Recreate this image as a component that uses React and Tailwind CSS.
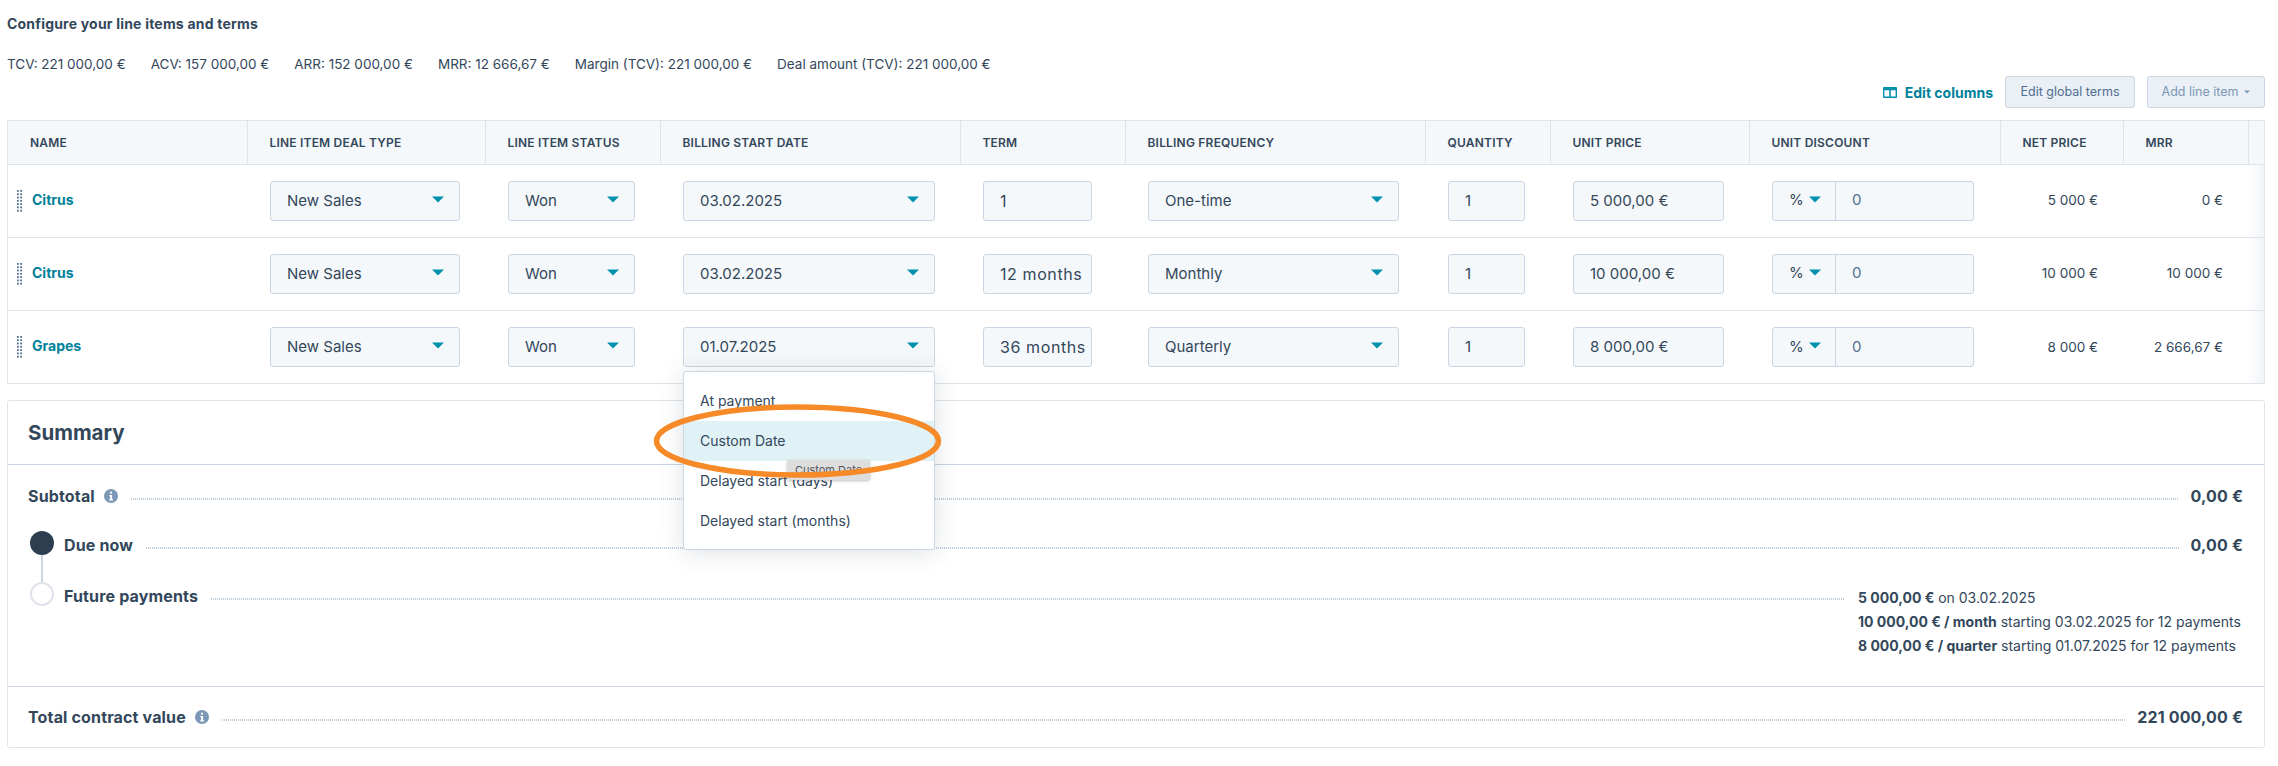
import React from "react";

const lineItems = [
  { name: "Citrus", date: "03.02.2025", term: "1", frequency: "One-time", price: "5 000,00 €", net: "5 000 €", mrr: "0 €" },
  { name: "Citrus", date: "03.02.2025", term: "12 months", frequency: "Monthly", price: "10 000,00 €", net: "10 000 €", mrr: "10 000 €" },
  { name: "Grapes", date: "01.07.2025", term: "36 months", frequency: "Quarterly", price: "8 000,00 €", net: "8 000 €", mrr: "2 666,67 €", open: true },
];

const metrics = [
  "TCV: 221 000,00 €",
  "ACV: 157 000,00 €",
  "ARR: 152 000,00 €",
  "MRR: 12 666,67 €",
  "Margin (TCV): 221 000,00 €",
  "Deal amount (TCV): 221 000,00 €",
];

const headers = [
  "Name",
  "Line item deal type",
  "Line item status",
  "Billing start date",
  "Term",
  "Billing frequency",
  "Quantity",
  "Unit price",
  "Unit discount",
  "Net price",
  "MRR",
];

function Caret({ className = "" }) {
  return (
    <svg width="12" height="7" viewBox="0 0 12 7" className={className}>
      <path d="M0 0.5h12L6 6.5z" fill="#0091ae" />
    </svg>
  );
}

function Select({ value, width }) {
  return (
    <div className={`flex h-10 items-center justify-between rounded-[3px] border border-[#cbd6e2] bg-[#f5f8fa] pl-4 pr-[15px] text-[15px] text-[#33475b] ${width}`}>
      <span className="pt-px">{value}</span>
      <Caret className="-mt-0.5" />
    </div>
  );
}

function TextBox({ value, width, className = "text-[15px]" }) {
  return (
    <div className={`flex h-10 items-center overflow-hidden whitespace-nowrap rounded-[3px] border border-[#cbd6e2] bg-[#f5f8fa] pl-4 pt-px text-[#33475b] ${width} ${className}`}>
      {value}
    </div>
  );
}

function DragHandle() {
  return (
    <svg width="5" height="22" viewBox="0 0 5 22" className="shrink-0">
      {[0, 3.3, 6.6, 9.9, 13.2, 16.5, 19.8].map((y) => (
        <g key={y} fill="#516f90">
          <rect x="0" y={y} width="1.8" height="1.8" />
          <rect x="3.2" y={y} width="1.8" height="1.8" />
        </g>
      ))}
    </svg>
  );
}

function InfoIcon() {
  return (
    <svg width="14" height="14" viewBox="0 0 14 14" className="shrink-0">
      <circle cx="7" cy="7" r="7" fill="#7c98b6" />
      <rect x="5.9" y="2.6" width="2.2" height="2.2" rx="1.1" fill="#fff" />
      <path d="M5.3 5.9h2.8v4.3h0.9v1.3H5.2v-1.3h0.9V7.2h-0.8z" fill="#fff" />
    </svg>
  );
}

function Dots({ className = "" }) {
  return <div className={`h-0.5 flex-1 bg-[repeating-linear-gradient(90deg,#bfcddb_0,#bfcddb_1px,transparent_1px,transparent_2px)] ${className}`} />;
}

function DateMenu() {
  return (
    <div className="absolute left-0 top-[44px] z-10 w-[252px] rounded-[3px] border border-[#cbd6e2] bg-white pb-2 pt-[9px] text-left text-[14px] text-[#33475b] shadow-[0_2px_24px_rgba(45,62,80,0.16)]">
      <div className="flex h-10 items-center pl-4">At payment</div>
      <div className="flex h-10 items-center bg-[#e0f2f6] pl-4">Custom Date</div>
      <div className="flex h-10 items-center pl-4">Delayed start (days)</div>
      <div className="flex h-10 items-center pl-4">Delayed start (months)</div>
      <div className="absolute left-[103px] top-[88px] flex h-5 w-[83px] items-center justify-center rounded-[2px] bg-[#dedddd] text-[11px] text-[#54565a] shadow-[0_1px_3px_rgba(0,0,0,0.25)]">
        Custom Date
      </div>
      <svg width="287" height="74" viewBox="0 0 287 74" className="absolute left-[-30px] top-[32px] overflow-visible">
        <ellipse cx="143.5" cy="37" rx="141" ry="34" fill="none" stroke="#f78a28" strokeWidth="5.5" />
      </svg>
    </div>
  );
}

function SummaryRow({ label, value, info, dotsClass = "" }) {
  return (
    <div className="flex h-6 items-center">
      <span className="text-[16px] font-bold tracking-[0.15px] text-[#33475b]">{label}</span>
      {info && <span className="ml-[9px]"><InfoIcon /></span>}
      <Dots className={`ml-[13px] mt-[6px] ${dotsClass}`} />
      <span className="ml-3 text-[16px] font-bold tracking-[0.15px] text-[#33475b]">{value}</span>
    </div>
  );
}

export default function App() {
  return (
    <div className="h-[766px] overflow-hidden bg-white pl-[7px] pr-[13px] pt-[14px] font-['Inter',sans-serif] text-[#33475b]">
      <h1 className="text-[14px] font-bold leading-5 tracking-[0.2px]">Configure your line items and terms</h1>

      <div className="mt-5 flex gap-[25px] text-[13.5px] leading-5">
        {metrics.map((m) => (
          <span key={m}>{m}</span>
        ))}
      </div>

      <div className="mt-0.5 flex h-8 items-center justify-end">
        <svg width="14" height="11" viewBox="0 0 14 11" className="mr-2">
          <path d="M1 0h12a1 1 0 0 1 1 1v9a1 1 0 0 1-1 1H1a1 1 0 0 1-1-1V1a1 1 0 0 1 1-1zm0.4 3.2v6.4h4.8V3.2zm6.4 0v6.4h4.8V3.2z" fill="#0091ae" fillRule="evenodd" />
        </svg>
        <span className="mr-3 text-[14px] font-bold text-[#00819b]">Edit columns</span>
        <button className="h-8 w-[130px] rounded-[3px] border border-[#cbd6e2] bg-[#eaf0f6] text-[12.5px] text-[#506e91]">
          Edit global terms
        </button>
        <button className="ml-3 flex h-8 w-[118px] items-center justify-center gap-1.5 rounded-[3px] border border-[#cbd6e2] bg-[#eaf0f6] text-[12.5px] text-[#7c98b6]">
          Add line item
          <svg width="6" height="4" viewBox="0 0 6 4">
            <path d="M0 0.5h6L3 3.5z" fill="#7c98b6" />
          </svg>
        </button>
      </div>

      <div className="mt-3 border border-[#dfe3eb]">
        <table className="w-[2256px] table-fixed">
          <colgroup>
            <col className="w-[239px]" />
            <col className="w-[238px]" />
            <col className="w-[175px]" />
            <col className="w-[300px]" />
            <col className="w-[165px]" />
            <col className="w-[300px]" />
            <col className="w-[125px]" />
            <col className="w-[199px]" />
            <col className="w-[251px]" />
            <col className="w-[123px]" />
            <col className="w-[125px]" />
            <col className="w-[16px]" />
          </colgroup>
          <thead>
            <tr className="h-[43px] border-b border-[#dfe3eb] bg-[#f5f8fa]">
              {headers.map((h) => (
                <th key={h} className="border-r border-[#dfe3eb] pl-[22px] pt-px text-left text-[12px] font-semibold uppercase tracking-[0.2px] text-[#33475b]">
                  {h}
                </th>
              ))}
              <th />
            </tr>
          </thead>
          <tbody>
            {lineItems.map((item, i) => (
              <tr key={i} className="h-[73px] border-b border-[#dfe3eb] last:border-b-0">
                <td className="pl-[9px]">
                  <div className="flex items-center gap-[10px]">
                    <DragHandle />
                    <a className="-mt-0.5 text-[14px] font-bold text-[#00819b]">{item.name}</a>
                  </div>
                </td>
                <td className="pl-[23px]"><Select value="New Sales" width="w-[190px]" /></td>
                <td className="pl-[23px]"><Select value="Won" width="w-[127px]" /></td>
                <td className="pl-[23px]">
                  <div className="relative">
                    <Select value={item.date} width="w-[252px]" />
                    {item.open && <DateMenu />}
                  </div>
                </td>
                <td className="pl-[23px]"><TextBox value={item.term} width="w-[109px]" className="text-[16px] tracking-[0.6px]" /></td>
                <td className="pl-[23px]"><Select value={item.frequency} width="w-[251px]" /></td>
                <td className="pl-[23px]"><TextBox value="1" width="w-[77px]" /></td>
                <td className="pl-[23px]"><TextBox value={item.price} width="w-[151px]" /></td>
                <td className="pl-[23px]">
                  <div className="flex h-10 w-[202px] items-center rounded-[3px] border border-[#cbd6e2] bg-[#f5f8fa] text-[15px]">
                    <div className="flex h-full w-[63px] items-center gap-[5px] border-r border-[#cbd6e2] pl-4">
                      %
                      <Caret className="-mt-0.5" />
                    </div>
                    <span className="pl-4 text-[#516f90]">0</span>
                  </div>
                </td>
                <td className="pr-[25px] text-right text-[13.5px]">{item.net}</td>
                <td className="pr-[25px] text-right text-[13.5px]">{item.mrr}</td>
                <td className="bg-linear-to-r from-white to-[#f1f3f6]" />
              </tr>
            ))}
          </tbody>
        </table>
      </div>

      <div className="mt-4 flex h-[348px] flex-col rounded-[3px] border border-[#dfe3eb]">
        <div className="flex h-[64px] shrink-0 items-center border-b border-[#cbd6e2] pl-[20px] pt-px text-[20.5px] font-bold">
          Summary
        </div>

        <div className="flex-1 pl-[22px] pr-[21px] pt-[18px]">
          <div className="-ml-[2px] pt-px">
            <SummaryRow label="Subtotal" value="0,00 €" info />
          </div>

          <div className="mt-[23px] flex">
            <div className="flex w-6 shrink-0 flex-col items-center">
              <div className="h-6 w-6 rounded-full bg-[#2d3e50]" />
              <div className="h-[27px] w-0.5 bg-[#cbd6e2]" />
            </div>
            <div className="ml-[10px] flex-1 pt-[2px]">
              <SummaryRow label="Due now" value="0,00 €" />
            </div>
          </div>

          <div className="flex">
            <div className="h-6 w-6 shrink-0 rounded-full border-2 border-[#dfe3eb]" />
            <div className="ml-[10px] flex flex-1 items-start">
              <div className="mt-[2px] flex h-6 flex-1 items-center">
                <span className="text-[16px] font-bold tracking-[0.15px]">Future payments</span>
                <Dots className="ml-[13px] mt-[6px]" />
              </div>
              <div className="ml-[13px] w-[385px] pt-[4px] text-[14px] leading-6">
                <div><b className="font-bold">5 000,00 €</b> on 03.02.2025</div>
                <div><b className="font-bold">10 000,00 € / month</b> starting 03.02.2025 for 12 payments</div>
                <div><b className="font-bold">8 000,00 € / quarter</b> starting 01.07.2025 for 12 payments</div>
              </div>
            </div>
          </div>
        </div>

        <div className="flex h-[61px] shrink-0 items-center border-t border-[#cbd6e2] pl-[20px] pr-[21px]">
          <div className="w-full">
            <SummaryRow label="Total contract value" value="221 000,00 €" info />
          </div>
        </div>
      </div>
    </div>
  );
}
